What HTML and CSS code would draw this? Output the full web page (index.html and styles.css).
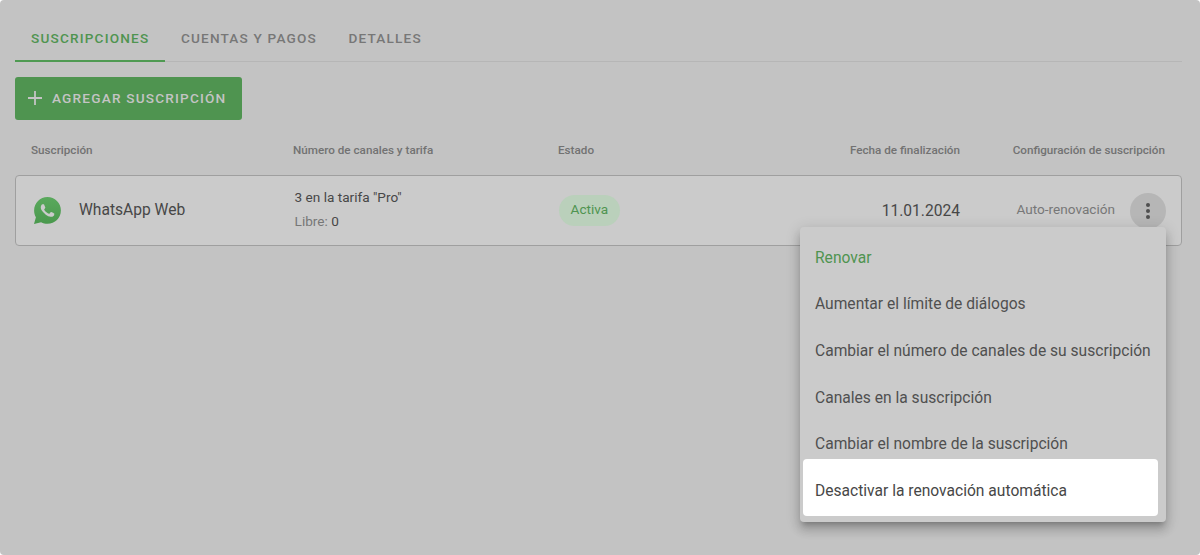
FILE: index.html
```html
<!DOCTYPE html>
<html lang="es">
<head>
<meta charset="utf-8">
<title>Suscripciones</title>
<link rel="stylesheet" href="styles.css">
</head>
<body>
<div class="page">
  <nav class="tabs">
    <a class="tab tab-active">Suscripciones</a>
    <a class="tab">Cuentas y pagos</a>
    <a class="tab">Detalles</a>
  </nav>
  <button class="add-btn">
    <svg class="plus" viewBox="0 0 16 16" width="16" height="16"><path d="M8 1v14M1 8h14" stroke="currentColor" stroke-width="1.8" fill="none"/></svg>
    <span>Agregar suscripción</span>
  </button>
  <div class="head-row">
    <div class="c-name">Suscripción</div>
    <div class="c-plan">Número de canales y tarifa</div>
    <div class="c-state">Estado</div>
    <div class="c-date">Fecha de finalización</div>
    <div class="c-conf">Configuración de suscripción</div>
  </div>
  <div class="card">
    <div class="c-name name-cell">
      <svg class="wa" viewBox="0 0 24 24" width="27" height="27">
        <defs><linearGradient id="wag" x1="0" y1="0" x2="0" y2="1"><stop offset="0" stop-color="#5aa95d"/><stop offset="1" stop-color="#4a984d"/></linearGradient></defs>
        <path fill="url(#wag)" d="M12 0C5.4 0 .1 5.3.1 11.9c0 2.1.5 4.2 1.6 6L0 24l6.3-1.65c1.75.95 3.7 1.45 5.7 1.45 6.6 0 11.9-5.3 11.9-11.9 0-3.2-1.2-6.2-3.5-8.4C18.2 1.2 15.2 0 12 0z"/>
        <path fill="#cbcbcb" d="M17.472 14.382c-.297-.149-1.758-.867-2.03-.967-.273-.099-.471-.148-.67.15-.197.297-.767.966-.94 1.164-.173.199-.347.223-.644.075-.297-.15-1.255-.463-2.39-1.475-.883-.788-1.48-1.761-1.653-2.059-.173-.297-.018-.458.13-.606.134-.133.298-.347.446-.52.149-.174.198-.298.298-.497.099-.198.05-.371-.025-.52-.075-.149-.669-1.612-.916-2.207-.242-.579-.487-.5-.669-.51-.173-.008-.371-.01-.57-.01-.198 0-.52.074-.792.372-.272.297-1.04 1.016-1.04 2.479 0 1.462 1.065 2.875 1.213 3.074.149.198 2.096 3.2 5.077 4.487.709.306 1.262.489 1.694.625.712.227 1.36.195 1.871.118.571-.085 1.758-.719 2.006-1.413.248-.694.248-1.289.173-1.413-.074-.124-.272-.198-.57-.347z"/>
      </svg>
      <span class="name-text">WhatsApp Web</span>
    </div>
    <div class="c-plan plan-cell">
      <div>3 en la tarifa "Pro"</div>
      <div class="free"><span class="free-label">Libre:</span> 0</div>
    </div>
    <div class="c-state"><span class="badge">Activa</span></div>
    <div class="c-date date-cell">11.01.2024</div>
    <div class="c-conf conf-cell">
      <span class="auto">Auto-renovación</span>
      <button class="more" aria-label="Más">
        <span class="dot"></span><span class="dot"></span><span class="dot"></span>
      </button>
    </div>
  </div>
  <ul class="menu">
    <li class="menu-item item-green">Renovar</li>
    <li class="menu-item">Aumentar el límite de diálogos</li>
    <li class="menu-item">Cambiar el número de canales de su suscripción</li>
    <li class="menu-item">Canales en la suscripción</li>
    <li class="menu-item">Cambiar el nombre de la suscripción</li>
    <li class="menu-item item-highlight">Desactivar la renovación automática</li>
  </ul>
</div>
</body>
</html>
```
FILE: styles.css
```css
* { box-sizing: border-box; }
html, body { margin: 0; height: 100%; background: #fff; }
body { font-family: Roboto, "Liberation Sans", sans-serif; overflow: hidden; }
.page {
  position: relative;
  height: 555px;
  background: #c3c3c3;
  border-radius: 4px;
  padding: 15px 18px 0 15px;
  overflow: hidden;
}
.tabs {
  display: flex;
  height: 47px;
  border-bottom: 1px solid #b6b6b6;
}
.tab {
  height: 47px;
  padding: 0 15.6px 0 16px;
  line-height: 46px;
  font-size: 13.6px;
  font-weight: 500;
  letter-spacing: 1.18px;
  text-transform: uppercase;
  color: #777;
}
.tab-active {
  color: #4f9450;
  border-bottom: 2px solid #4f9a52;
}
.add-btn {
  display: flex;
  align-items: center;
  gap: 9px;
  width: 227px;
  height: 43px;
  margin-top: 15px;
  padding: 0 0 1px 12px;
  border: 0;
  border-radius: 3px;
  background: #4f9450;
  color: #c4c4c4;
  font: 500 13.6px Roboto, sans-serif;
  letter-spacing: 1.2px;
  text-transform: uppercase;
}
.plus { flex: none; }
.head-row, .card { display: flex; align-items: center; }
.head-row {
  height: 24px;
  margin-top: 18px;
  padding-right: 17px;
  font-size: 11.7px;
  font-weight: 500;
  color: #727272;
}
.card {
  height: 71px;
  margin-top: 13px;
  padding-right: 15px;
  background: #cbcbcb;
  border: 1px solid #9f9f9f;
  border-radius: 4px;
}
.c-name { width: 278px; padding-left: 16px; }
.c-plan { width: 265px; }
.c-state { width: 150px; }
.c-date { width: 252px; text-align: right; }
.c-conf { flex: 1; text-align: right; }
.card .c-name { width: 277px; padding-left: 18px; }
.card .c-plan { padding-left: 1.6px; width: 265px; }
.name-cell { display: flex; align-items: center; gap: 18px; font-size: 15.6px; color: #474747; }
.name-text { padding-bottom: 1px; }
.wa { flex: none; }
.plan-cell { font-size: 13.6px; line-height: 24px; color: #474747; padding-bottom: 4px; }
.free-label { color: #777; }
.badge {
  display: inline-block;
  height: 31px;
  line-height: 29.5px;
  padding: 0 11.6px;
  margin-left: 1px;
  border-radius: 16px;
  background: #bad0bb;
  color: #4f9450;
  font-size: 13.6px;
}
.date-cell { font-size: 15.6px; color: #474747; }
.conf-cell { display: flex; align-items: center; justify-content: flex-end; gap: 15px; }
.auto { font-size: 13.6px; color: #777; padding-bottom: 3px; }
.more {
  display: flex;
  flex-direction: column;
  align-items: center;
  justify-content: center;
  gap: 2px;
  width: 36px;
  height: 36px;
  padding: 0;
  border: 0;
  border-radius: 50%;
  background: #b6b6b6;
}
.dot { width: 4px; height: 4px; border-radius: 50%; background: #4f4f4f; }
.menu {
  position: absolute;
  left: 800px;
  top: 227px;
  width: 366px;
  height: 295px;
  margin: 0;
  padding: 7.2px 8px 0 3px;
  list-style: none;
  background: #cbcbcb;
  border-radius: 4px;
  box-shadow: 0 5px 5px -3px rgba(0,0,0,.2), 0 8px 10px 1px rgba(0,0,0,.14), 0 3px 14px 2px rgba(0,0,0,.12);
}
.menu-item {
  display: flex;
  align-items: center;
  height: 46.7px;
  padding-left: 12px;
  font-size: 15.6px;
  color: #505050;
  white-space: nowrap;
}
.item-green { color: #4f9450; }
.item-highlight {
  height: 57px;
  margin-top: -8.7px;
  padding-top: 8px;
  border-radius: 4px;
  background: #fff;
  color: #474747;
}
```
